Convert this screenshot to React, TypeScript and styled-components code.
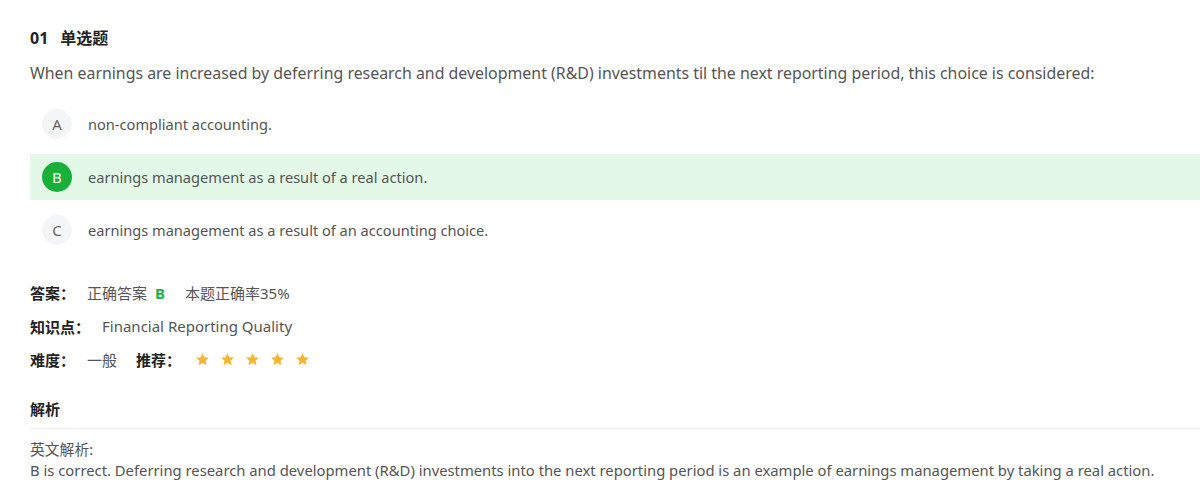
import React from 'react';
import styled, { createGlobalStyle } from 'styled-components';

const GlobalStyle = createGlobalStyle`
  body {
    margin: 0;
    background: #fff;
    font-family: "Noto Sans", "Noto Sans CJK SC", sans-serif;
    color: #555;
  }
`;

const options = [
  { key: 'A', text: 'non-compliant accounting.' },
  { key: 'B', text: 'earnings management as a result of a real action.' },
  { key: 'C', text: 'earnings management as a result of an accounting choice.' },
];

const Star = () => (
  <svg width="15" height="15" viewBox="0 0 24 24">
    <path
      d="M12 1.8l3 6.6 7.2.7-5.4 4.8 1.6 7.1L12 17.3 5.6 21l1.6-7.1-5.4-4.8 7.2-.7z"
      fill="#f5b52e"
    />
  </svg>
);

const App = () => {
  const answer = 'B';
  return (
    <Page>
      <GlobalStyle />
      <Title>
        <span>01</span>
        <span>单选题</span>
      </Title>
      <Question>
        When earnings are increased by deferring research and development (R&amp;D) investments til the next reporting period, this choice is considered:
      </Question>

      <Options>
        {options.map((o) => (
          <Option key={o.key} $active={o.key === answer}>
            <Letter $active={o.key === answer}>{o.key}</Letter>
            <span>{o.text}</span>
          </Option>
        ))}
      </Options>

      <Meta>
        <MetaRow>
          <Label>答案：</Label>
          <Value $gap={8}>正确答案</Value>
          <Correct>B</Correct>
          <Value>本题正确率35%</Value>
        </MetaRow>
        <MetaRow>
          <Label>知识点：</Label>
          <Value>Financial Reporting Quality</Value>
        </MetaRow>
        <MetaRow>
          <Label>难度：</Label>
          <Value $gap={19}>一般</Value>
          <Label $gap={14}>推荐：</Label>
          <Stars>
            {[0, 1, 2, 3, 4].map((i) => (
              <Star key={i} />
            ))}
          </Stars>
        </MetaRow>
      </Meta>

      <SectionHead>解析</SectionHead>
      <Analysis>
        <div>英文解析:</div>
        <div>
          B is correct. Deferring research and development (R&amp;D) investments into the next reporting period is an example of earnings management by taking a real action.
        </div>
      </Analysis>
    </Page>
  );
};

const Page = styled.div`
  padding: 27px 0 0 30px;
`;

const Title = styled.div`
  display: flex;
  gap: 12px;
  font-size: 16px;
  font-weight: 700;
  color: #222;
  line-height: 22px;
`;

const Question = styled.div`
  margin-top: 12px;
  font-size: 15.9px;
  line-height: 24px;
  color: #555;
`;

const Options = styled.div`
  display: flex;
  flex-direction: column;
  gap: 7px;
  margin-top: 16px;
`;

const Option = styled.div<{ $active?: boolean }>`
  display: flex;
  align-items: center;
  gap: 16px;
  height: 46px;
  padding-left: 12px;
  font-size: 14.6px;
  color: #555;
  background: ${(p) => (p.$active ? '#e3f8e6' : 'transparent')};
`;

const Letter = styled.div<{ $active?: boolean }>`
  width: 30px;
  height: 30px;
  border-radius: 50%;
  display: flex;
  align-items: center;
  justify-content: center;
  font-size: 15px;
  background: ${(p) => (p.$active ? '#17b03a' : '#f4f5f7')};
  color: ${(p) => (p.$active ? '#fff' : '#666')};
`;

const Meta = styled.div`
  display: flex;
  flex-direction: column;
  margin-top: 23px;
`;

const MetaRow = styled.div`
  display: flex;
  align-items: center;
  height: 33.5px;
  font-size: 15px;
`;

const Label = styled.span<{ $gap?: number }>`
  font-weight: 700;
  color: #222;
  margin-right: ${(p) => p.$gap ?? 12}px;
`;

const Value = styled.span<{ $gap?: number }>`
  color: #555;
  margin-right: ${(p) => p.$gap ?? 20}px;
`;

const Correct = styled.span`
  color: #1db14b;
  font-weight: 700;
  margin-right: 20px;
`;

const Stars = styled.span`
  display: flex;
  gap: 10px;
`;

const SectionHead = styled.div`
  margin-top: 21px;
  padding-bottom: 8px;
  border-bottom: 1px solid #ececec;
  font-size: 15px;
  font-weight: 700;
  color: #222;
  line-height: 22px;
`;

const Analysis = styled.div`
  margin-top: 10px;
  font-size: 14.8px;
  line-height: 21px;
  color: #555;
`;

export default App;
